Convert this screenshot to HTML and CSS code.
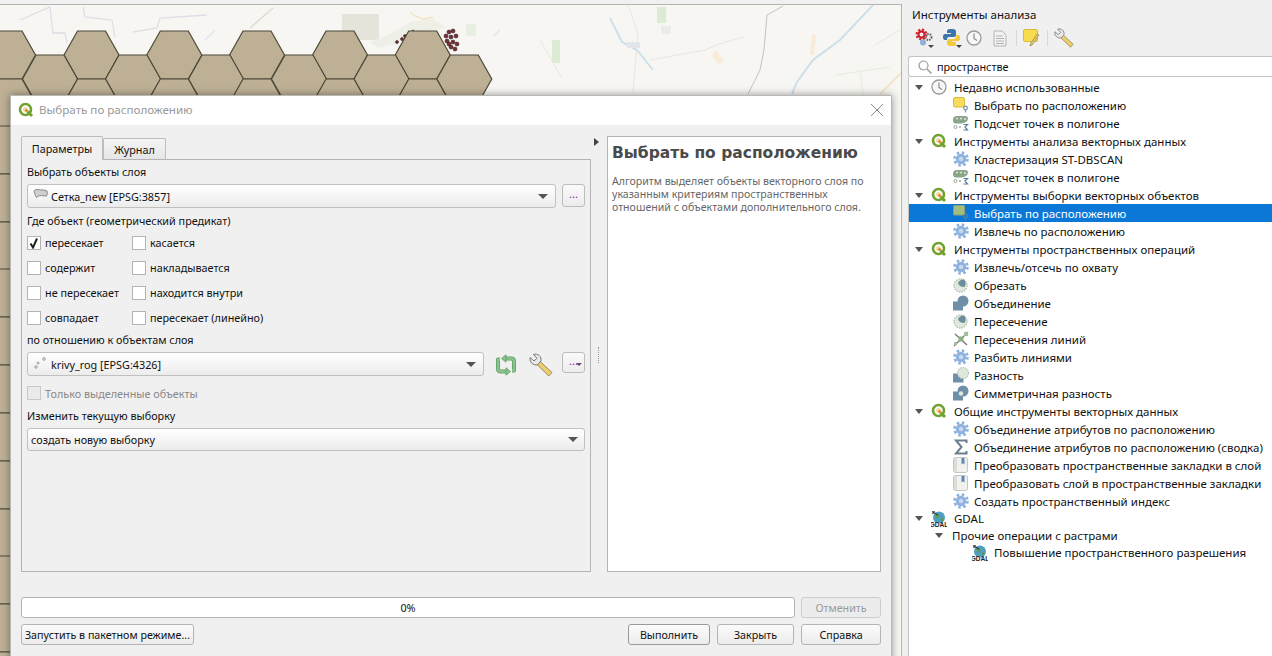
FILE: index.html
```html
<!DOCTYPE html>
<html lang="ru">
<head>
    <meta charset="UTF-8">
    <meta name="viewport" content="width=device-width, initial-scale=1.0">
    <title>Выбрать по расположению</title>
    <link rel="stylesheet" href="styles.css">
</head>
<body>

    <!-- shared icons -->
    <svg class="icon-defs" aria-hidden="true">
        <defs>
            <symbol id="i-qgis" viewBox="0 0 16 16">
                <circle cx="7.500" cy="7.500" r="5.500" fill="none" stroke="#6fa22e" stroke-width="2.600"/>
                <path d="M9.500 9.500l4.500 4.500" stroke="#6fa22e" stroke-width="3"/>
                <path d="M7.500 5a2.500 2.500 0 0 1 0 5a2.500 2.500 0 0 1 0-5z" fill="#f3d9a0"/>
                <circle cx="8.500" cy="8.500" r="1.300" fill="#e8701a"/>
            </symbol>
            <symbol id="i-clock" viewBox="0 0 16 16">
                <circle cx="8" cy="8" r="7" fill="#f7f7f7" stroke="#9a9a9a" stroke-width="1.300"/>
                <path d="M8 3.500V8.500L11 10.500" fill="none" stroke="#8a8a8a" stroke-width="1.200"/>
            </symbol>
            <symbol id="i-select" viewBox="0 0 16 16">
                <rect x="0.500" y="0.500" width="11" height="9.500" rx="1.500" fill="#f7dd5e" stroke="#d8bb3a"/>
                <circle cx="12.500" cy="11" r="1.800" fill="none" stroke="#6f8fa8" stroke-width="1.200"/>
                <path d="M12.500 13v2.500" stroke="#6f8fa8" stroke-width="1.200"/>
            </symbol>
            <symbol id="i-select-on" viewBox="0 0 16 16">
                <rect x="0.500" y="0.500" width="11" height="9.500" rx="1" fill="#a3bd80" stroke="#8aa46c"/>
                <circle cx="12.500" cy="11" r="1.800" fill="none" stroke="#5f7f9f" stroke-width="1.200"/>
                <path d="M12.500 13v2.500" stroke="#5f7f9f" stroke-width="1.200"/>
            </symbol>
            <symbol id="i-count" viewBox="0 0 16 16">
                <path d="M3 1h9q3 0 3 2.500T12 7.500L9 8.500H3Q0 8.500 0 5t3-4z" fill="#8aa58a"/>
                <circle cx="4" cy="3.500" r="1" fill="#dfe8dc"/>
                <circle cx="8" cy="3.500" r="1" fill="#dfe8dc"/>
                <circle cx="12" cy="4" r="1" fill="#dfe8dc"/>
                <circle cx="2.500" cy="12" r="1.500" fill="none" stroke="#9aa89a"/>
                <circle cx="7" cy="12" r="1" fill="#9aa89a"/>
                <path d="M10.500 9.500h4l-2.500 2.500 2.500 3h-4" fill="none" stroke="#5a7fa0" stroke-width="1.200"/>
            </symbol>
            <symbol id="i-gear" viewBox="0 0 16 16">
                <circle cx="8" cy="8" r="6.500" fill="none" stroke="#8db0df" stroke-width="2.600" stroke-dasharray="2.550 2.550"/>
                <circle cx="8" cy="8" r="5.200" fill="#8fb1de"/>
                <circle cx="8" cy="8" r="2.300" fill="#c6d7ef"/>
            </symbol>
            <symbol id="i-clip" viewBox="0 0 16 16">
                <circle cx="7.500" cy="8.500" r="6.500" fill="#dfe8dc" stroke="#b4c6b2" stroke-width="1.500" stroke-dasharray="1.500 1"/>
                <path d="M5 6q2-4 6-3.500 3 3 .5 7.500Q6 10 5 6z" fill="#6c8d9c"/>
            </symbol>
            <symbol id="i-union" viewBox="0 0 16 16">
                <rect x="0" y="6.500" width="10" height="9" fill="#6d90a8"/>
                <circle cx="10" cy="6" r="5.500" fill="#6d90a8"/>
            </symbol>
            <symbol id="i-lines" viewBox="0 0 16 16">
                <path d="M1 15L15 1M2 3l12 11" stroke="#6f7a6f" stroke-width="1.300" fill="none"/>
                <rect x="5.500" y="5.500" width="5" height="5" fill="#8caf84"/>
                <rect x="11" y="1" width="4" height="4" fill="#a5bd9f"/>
                <rect x="1" y="11" width="3" height="3" fill="#a5bd9f"/>
            </symbol>
            <symbol id="i-diff" viewBox="0 0 16 16">
                <rect x="0" y="6.500" width="10.500" height="9" fill="#6d90a8"/>
                <circle cx="10" cy="6" r="5.500" fill="#dfe8dc" stroke="#b4c6b2" stroke-width="1.200" stroke-dasharray="1.500 1"/>
            </symbol>
            <symbol id="i-symdiff" viewBox="0 0 16 16">
                <rect x="0" y="6.500" width="10" height="9" fill="#6d90a8"/>
                <circle cx="10" cy="6" r="5.500" fill="#6d90a8"/>
                <circle cx="8" cy="8.500" r="2.200" fill="#dfe8dc"/>
            </symbol>
            <symbol id="i-sigma" viewBox="0 0 16 16">
                <path d="M13.500 4V1.500H3L8.500 8 3 14.500H13.500V12" fill="none" stroke="#6a7f8c" stroke-width="2"/>
            </symbol>
            <symbol id="i-book" viewBox="0 0 16 16">
                <rect x="0.500" y="0.500" width="14" height="15" rx="2" fill="#f1f1ee" stroke="#c4c4c0"/>
                <rect x="1" y="1" width="3" height="14" fill="#dcdcd8"/>
                <path d="M8.500 1h3v6.500l-1.500-1.200-1.500 1.200z" fill="#5f87b5"/>
            </symbol>
            <symbol id="i-gdal" viewBox="0 0 16 16">
                <circle cx="8" cy="6.500" r="6" fill="#4f9fc4"/>
                <path d="M4 4l3-1 2 2-3 3zM9 8l3-1 1 2-2 2z" fill="#5f9a52"/>
                <path d="M1 0.500l6 3.500M3.500 0l-2 3" stroke="#333" stroke-width="1.100"/>
                <text x="8" y="15.500" class="gdal-text">GDAL</text>
            </symbol>
            <symbol id="i-wrench" viewBox="0 0 24 24">
                <path d="M10.500 8L23 19.500 19.800 23 7.500 11z" fill="#eccf6c" stroke="#7c7654" stroke-width="0.800"/>
                <path d="M1.200 4.500L5 8 8 5.300 4.500 1.500C8.500 0 12.800 3.200 12 8L8.500 11.800C4 12.800 0.200 9 1.200 4.500z" fill="#e9e9e9" stroke="#777" stroke-width="1"/>
            </symbol>
            <symbol id="i-layer-poly" viewBox="0 0 16 16">
                <path d="M1 3q1-2 4-1.500t5 .5 4 1q1 3-.5 5-2.500 0-5-.5t-5 2q-2-3-2.500-6.500z" fill="#cfcfcf" stroke="#8c8c8c"/>
            </symbol>
            <symbol id="i-layer-point" viewBox="0 0 16 16">
                <circle cx="3" cy="11" r="1.200" fill="none" stroke="#999"/>
                <circle cx="5" cy="7" r="1" fill="none" stroke="#999"/>
                <circle cx="11" cy="3" r="1.300" fill="none" stroke="#999"/>
            </symbol>
        </defs>
    </svg>

    <div class="workspace">
        <div class="map-canvas">
            <svg class="map" width="901" height="651" viewBox="0 5 901 651">
                <defs>
                    <polygon id="hex" points="-27.500,0 -14,-24 14,-24 27.500,0 14,24 -14,24"/>
                </defs>
                <rect x="0" y="5" width="901" height="651" fill="#f7f6f2"/>
                <!-- land use patches -->
                <rect x="342" y="14" width="37" height="26" fill="#e4e4da"/>
                <path d="M370 42l20-8 20-12 22-4 14 10-30 4-20 12-18 4z" fill="#eef0e8"/>
                <rect x="466" y="24" width="10" height="12" fill="#e6efe0"/>
                <rect x="657" y="7" width="9" height="16" fill="#dcecd2"/>
                <rect x="552" y="40" width="8" height="23" fill="#dcecd2"/>
                <rect x="661" y="26" width="10" height="8" fill="#ebebe8"/>
                <path d="M812 35l4 0-2 20-4 0z" fill="#f8ecd8"/>
                <path d="M716 50l8 12-6 2-6-8z" fill="#f8ecd8"/>
                <!-- boundaries -->
                <path d="M20 20L50 7 53 33H65L67 43M83 7L85 17 112 20 115 37M133 32L157 28 160 18 207 15" fill="none" stroke="#e2dce6" stroke-width="1.300"/>
                <path d="M250 28L273 8" fill="none" stroke="#dcdcd6" stroke-width="1.500"/>
                <path d="M540 40l22 38M628 5l10 28-5 60M650 60l55-10 20-8 20-5M900 30l-25 15" fill="none" stroke="#e8e6e2"/>
                <path d="M860 70l3 25M835 75l55-8" fill="none" stroke="#e4eede"/>
                <!-- rivers -->
                <path d="M610 18l12 24 15 8 16 20M873 5L840 40 813 60 797 82 792 94" fill="none" stroke="#cbe0ea" stroke-width="2"/>
                <path d="M205 40l10-10M500 30l-6 6" fill="none" stroke="#dce8ee" stroke-width="1.500"/>
                <path d="M627 42h13v6h-13z" fill="#e2e6e8"/>
                <!-- roads -->
                <path d="M783 6L767 15 764 50 760 70 748 94" fill="none" stroke="#c2c2c0"/>
                <path d="M901 73L880 94" fill="none" stroke="#f4dcb8" stroke-width="1.300"/>
                <path d="M410 12l5 4 8 3 10-2" fill="none" stroke="#f2dcae"/>
                <!-- points layer -->
                <g class="points">
                    <circle cx="397" cy="42" r="1.500"/><circle cx="402" cy="39" r="1.500"/><circle cx="405" cy="36" r="1.500"/>
                    <circle cx="413" cy="31" r="1"/><circle cx="449" cy="32" r="2"/><circle cx="453" cy="31" r="2"/>
                    <circle cx="446" cy="36" r="2"/><circle cx="451" cy="37" r="2"/><circle cx="456" cy="36" r="2"/>
                    <circle cx="447" cy="41" r="2"/><circle cx="453" cy="42" r="2"/><circle cx="457" cy="44" r="2"/>
                    <circle cx="451" cy="47" r="2"/><circle cx="455" cy="49" r="2"/><circle cx="449" cy="44" r="2"/>
                </g>
                <!-- grid layer -->
                <g class="hexes">
                    <use href="#hex" x="8" y="55"/><use href="#hex" x="91.500" y="55"/><use href="#hex" x="174.300" y="55"/>
                    <use href="#hex" x="257" y="55"/><use href="#hex" x="340" y="55"/><use href="#hex" x="422.700" y="55"/>
                    <use href="#hex" x="50" y="79"/><use href="#hex" x="133" y="79"/><use href="#hex" x="216" y="79"/>
                    <use href="#hex" x="299" y="79"/><use href="#hex" x="381.500" y="79"/><use href="#hex" x="464.300" y="79"/>
                    <use href="#hex" x="8" y="103"/><use href="#hex" x="91.500" y="103"/><use href="#hex" x="174.300" y="103"/>
                    <use href="#hex" x="257" y="103"/><use href="#hex" x="340" y="103"/><use href="#hex" x="422.700" y="103"/>
                    <use href="#hex" x="8" y="150"/><use href="#hex" x="8" y="198"/><use href="#hex" x="8" y="246"/>
                    <use href="#hex" x="8" y="293"/><use href="#hex" x="8" y="341"/><use href="#hex" x="8" y="389"/>
                    <use href="#hex" x="8" y="437"/><use href="#hex" x="8" y="485"/><use href="#hex" x="8" y="533"/>
                    <use href="#hex" x="8" y="580"/><use href="#hex" x="8" y="628"/><use href="#hex" x="8" y="676"/>
                </g>
            </svg>
        </div>

        <div class="dialog">
            <div class="dialog-title">
                <svg class="ico"><use href="#i-qgis"/></svg>
                <span class="dialog-caption">Выбрать по расположению</span>
                <svg class="close-x" width="14" height="14" viewBox="0 0 14 14"><path d="M1 1l12 12M13 1L1 13" stroke="#8a8a8a" fill="none"/></svg>
            </div>
            <div class="dialog-body">
                <div class="main-split">
                    <div class="tabs-col">
                        <div class="tabbar">
                            <div class="tab tab-active">Параметры</div>
                            <div class="tab">Журнал</div>
                        </div>
                        <div class="tab-pane">
                            <div class="field-label">Выбрать объекты слоя</div>
                            <div class="line">
                                <div class="combo combo-tall">
                                    <svg class="ico"><use href="#i-layer-poly"/></svg>
                                    <span class="combo-text">Сетка_new [EPSG:3857]</span>
                                    <span class="arrow"></span>
                                </div>
                                <button class="dots-btn">...</button>
                            </div>
                            <div class="field-label label-pred">Где объект (геометрический предикат)</div>
                            <div class="checks">
                                <label class="check"><span class="box"><svg width="12" height="12" viewBox="0 0 12 12"><path d="M2.500 6.500l2.500 4 4-9" fill="none" stroke="#222" stroke-width="2"/></svg></span>пересекает</label>
                                <label class="check"><span class="box"></span>касается</label>
                                <label class="check"><span class="box"></span>содержит</label>
                                <label class="check"><span class="box"></span>накладывается</label>
                                <label class="check"><span class="box"></span>не пересекает</label>
                                <label class="check"><span class="box"></span>находится внутри</label>
                                <label class="check"><span class="box"></span>совпадает</label>
                                <label class="check"><span class="box"></span>пересекает (линейно)</label>
                            </div>
                            <div class="field-label label-rel">по отношению к объектам слоя</div>
                            <div class="line">
                                <div class="combo combo-tall">
                                    <svg class="ico"><use href="#i-layer-point"/></svg>
                                    <span class="combo-text">krivy_rog [EPSG:4326]</span>
                                    <span class="arrow"></span>
                                </div>
                                <svg class="tool-refresh" width="22" height="22" viewBox="0 0 22 22">
                                    <g class="loop-back">
                                        <path d="M9 4.500h7q3 0 3 3v9h-2M13 17.500H6q-3 0-3-3v-9h2"/>
                                    </g>
                                    <g class="loop-front">
                                        <path d="M9 4.500h7q3 0 3 3v9h-2M13 17.500H6q-3 0-3-3v-9h2"/>
                                    </g>
                                    <path class="loop-head" d="M6.500 4.500L11 0.800V8.200zM15.500 17.500L11 13.800V21.200z"/>
                                </svg>
                                <svg class="tool-wrench"><use href="#i-wrench"/></svg>
                                <button class="dots-btn dots-menu">...<span class="arrow arrow-small"></span></button>
                            </div>
                            <label class="check check-off"><span class="box"></span>Только выделенные объекты</label>
                            <div class="field-label label-mod">Изменить текущую выборку</div>
                            <div class="combo combo-wide">
                                <span class="combo-text">создать новую выборку</span>
                                <span class="arrow"></span>
                            </div>
                        </div>
                    </div>
                    <div class="splitter">
                        <span class="collapse"></span>
                        <span class="grip"></span>
                    </div>
                    <div class="help">
                        <h2>Выбрать по расположению</h2>
                        <p>Алгоритм выделяет объекты векторного слоя по указанным критериям пространственных отношений с объектами дополнительного слоя.</p>
                    </div>
                </div>
                <div class="progress-line">
                    <div class="progress">0%</div>
                    <button class="btn btn-off">Отменить</button>
                </div>
                <div class="button-line">
                    <button class="btn btn-batch">Запустить в пакетном режиме...</button>
                    <span class="spacer"></span>
                    <button class="btn btn-run">Выполнить</button>
                    <button class="btn btn-closeit">Закрыть</button>
                    <button class="btn btn-help">Справка</button>
                </div>
            </div>
        </div>
    </div>

    <div class="panel">
        <div class="panel-title">Инструменты анализа</div>
        <div class="toolbar">
            <svg class="tb tb-gears" width="20" height="20" viewBox="0 0 20 20">
                <circle cx="6.500" cy="6.500" r="4.500" fill="none" stroke="#d9252a" stroke-width="3" stroke-dasharray="2 1.500"/>
                <circle cx="6.500" cy="6.500" r="3" fill="none" stroke="#c8202a" stroke-width="2"/>
                <circle cx="13.500" cy="9" r="3" fill="none" stroke="#666" stroke-width="2" stroke-dasharray="1.500 1"/>
                <circle cx="8" cy="14.500" r="3" fill="#8fb1dd"/>
                <path d="M13 17h6l-3 3z" fill="#444"/>
            </svg>
            <svg class="tb tb-python" width="20" height="20" viewBox="0 0 20 20">
                <path d="M8 1h3q3 0 3 3v3q0 2-2 2H7q-2 0-2 2v1H3Q1 12 1 9t2-3h6V5H5V3q0-2 3-2z" fill="#3a76a8"/>
                <path d="M14 7h2q2 0 2 3t-2 3h-6v1h4v2q0 2-3 2H8q-3 0-3-3v-2q0-2 2-2h5q2 0 2-2z" fill="#f4c93c"/>
                <path d="M14 17h6l-3 3z" fill="#444"/>
            </svg>
            <svg class="tb tb-clock"><use href="#i-clock"/></svg>
            <svg class="tb tb-doc" width="14" height="17" viewBox="0 0 14 17">
                <path d="M1 1h8l4 4v11H1z" fill="#f2f2f2" stroke="#b4b4b4"/>
                <path d="M3 6h7M3 8.500h8M3 11h8M3 13.500h8" stroke="#b4b4b4"/>
            </svg>
            <span class="tb-sep"></span>
            <svg class="tb tb-note" width="18" height="18" viewBox="0 0 18 18">
                <rect x="0.500" y="0.500" width="14" height="12" rx="1.500" fill="#f7dd4e" stroke="#d8bb3a"/>
                <path d="M16 6L9 16l-2 1 .5-2.500L14 5z" fill="#e4c860" stroke="#9a8a50" stroke-width="0.800"/>
            </svg>
            <span class="tb-sep"></span>
            <svg class="tb tb-wrench"><use href="#i-wrench"/></svg>
        </div>
        <div class="search">
            <svg width="14" height="14" viewBox="0 0 14 14"><circle cx="5.500" cy="5.500" r="4.500" fill="none" stroke="#9a9a9a" stroke-width="1.200"/><path d="M9 9l4.500 4.500" stroke="#9a9a9a" stroke-width="1.500"/></svg>
            <span>пространстве</span>
        </div>
        <ul class="tree">
            <li class="row group"><span class="tw"></span><svg class="ico"><use href="#i-clock"/></svg>Недавно использованные</li>
            <li class="row child"><svg class="ico"><use href="#i-select"/></svg>Выбрать по расположению</li>
            <li class="row child"><svg class="ico"><use href="#i-count"/></svg>Подсчет точек в полигоне</li>
            <li class="row group"><span class="tw"></span><svg class="ico"><use href="#i-qgis"/></svg>Инструменты анализа векторных данных</li>
            <li class="row child"><svg class="ico"><use href="#i-gear"/></svg>Кластеризация ST-DBSCAN</li>
            <li class="row child"><svg class="ico"><use href="#i-count"/></svg>Подсчет точек в полигоне</li>
            <li class="row group"><span class="tw"></span><svg class="ico"><use href="#i-qgis"/></svg>Инструменты выборки векторных объектов</li>
            <li class="row child selected"><svg class="ico"><use href="#i-select-on"/></svg>Выбрать по расположению</li>
            <li class="row child"><svg class="ico"><use href="#i-gear"/></svg>Извлечь по расположению</li>
            <li class="row group"><span class="tw"></span><svg class="ico"><use href="#i-qgis"/></svg>Инструменты пространственных операций</li>
            <li class="row child"><svg class="ico"><use href="#i-gear"/></svg>Извлечь/отсечь по охвату</li>
            <li class="row child"><svg class="ico"><use href="#i-clip"/></svg>Обрезать</li>
            <li class="row child"><svg class="ico"><use href="#i-union"/></svg>Объединение</li>
            <li class="row child"><svg class="ico"><use href="#i-clip"/></svg>Пересечение</li>
            <li class="row child"><svg class="ico"><use href="#i-lines"/></svg>Пересечения линий</li>
            <li class="row child"><svg class="ico"><use href="#i-gear"/></svg>Разбить линиями</li>
            <li class="row child"><svg class="ico"><use href="#i-diff"/></svg>Разность</li>
            <li class="row child"><svg class="ico"><use href="#i-symdiff"/></svg>Симметричная разность</li>
            <li class="row group"><span class="tw"></span><svg class="ico"><use href="#i-qgis"/></svg>Общие инструменты векторных данных</li>
            <li class="row child"><svg class="ico"><use href="#i-gear"/></svg>Объединение атрибутов по расположению</li>
            <li class="row child"><svg class="ico"><use href="#i-sigma"/></svg>Объединение атрибутов по расположению (сводка)</li>
            <li class="row child"><svg class="ico"><use href="#i-book"/></svg>Преобразовать пространственные закладки в слой</li>
            <li class="row child"><svg class="ico"><use href="#i-book"/></svg>Преобразовать слой в пространственные закладки</li>
            <li class="row child"><svg class="ico"><use href="#i-gear"/></svg>Создать пространственный индекс</li>
            <li class="row group row-short"><span class="tw"></span><svg class="ico"><use href="#i-gdal"/></svg>GDAL</li>
            <li class="row subgroup row-short"><span class="tw"></span>Прочие операции с растрами</li>
            <li class="row subchild row-short"><svg class="ico"><use href="#i-gdal"/></svg>Повышение пространственного разрешения</li>
        </ul>
    </div>

</body>
</html>
```

FILE: styles.css
```css
* {
    box-sizing: border-box;
}
html, body {
    height: 100%;
}
body {
    margin: 0;
    width: 1272px;
    height: 656px;
    overflow: hidden;
    display: flex;
    background-color: #f0f0f0;
    color: #111;
    font-family: "Noto Sans", "Liberation Sans", sans-serif;
    font-size: 11.5px;
}
.icon-defs {
    position: absolute;
    width: 0;
    height: 0;
}
.ico {
    width: 16px;
    height: 16px;
    flex: none;
}
.gdal-text {
    font-family: "Liberation Sans", sans-serif;
    font-size: 6.5px;
    font-weight: bold;
    text-anchor: middle;
    fill: #222;
}

/* left side, map + floating dialog */
.workspace {
    position: relative;
    flex: 0 0 902px;
    padding-top: 4px;
}
.map-canvas {
    height: 652px;
    border-top: 1px solid #b4b4b4;
    border-right: 1px solid #b4b4b4;
    overflow: hidden;
}
.map {
    display: block;
}
.hexes use {
    fill: #bdb095;
    stroke: #4c4839;
    stroke-width: 1.2;
}
.points circle {
    fill: #7b2c33;
    stroke: #33262a;
    stroke-width: 0.6;
}

.dialog {
    position: absolute;
    left: 10px;
    top: 95px;
    width: 882px;
    height: 590px;
    background-color: #f0f0f0;
    border: 1px solid #b8b8b8;
    box-shadow: 0 0 8px rgba(0, 0, 0, 0.4);
    display: flex;
    flex-direction: column;
    font-size: 10.8px;
}
.dialog-title {
    height: 29px;
    flex: none;
    background-color: #fff;
    display: flex;
    align-items: center;
    padding: 0 7px 2px 7px;
    gap: 5px;
}
.dialog-caption {
    color: #999;
    font-size: 11.6px;
}
.close-x {
    margin-left: auto;
}
.dialog-body {
    padding: 11px 10px 0 10px;
    display: flex;
    flex-direction: column;
}
.main-split {
    display: flex;
    height: 436px;
}
.tabs-col {
    width: 570px;
    flex: none;
    display: flex;
    flex-direction: column;
}
.tabbar {
    display: flex;
    height: 24px;
    align-items: flex-end;
    flex: none;
    position: relative;
    z-index: 1;
    margin-bottom: -1px;
}
.tab {
    height: 22px;
    width: 63px;
    background: linear-gradient(#f4f4f4, #e6e6e6);
    border: 1px solid #bcbcbc;
    border-bottom: 1px solid #b4b4b4;
    border-radius: 2px 2px 0 0;
    display: flex;
    align-items: center;
    justify-content: center;
}
.tab-active {
    height: 24px;
    width: 82px;
    background: #f0f0f0;
    border-bottom-color: #f0f0f0;
}
.tab-pane {
    flex: 1;
    border: 1px solid #b4b4b4;
    padding: 5px 5px 0 5px;
}
.field-label {
    height: 14px;
    line-height: 14px;
    margin-top: 0;
}
.line {
    display: flex;
    align-items: flex-start;
    margin-top: 5px;
}
.combo {
    display: flex;
    align-items: center;
    border: 1px solid #c0c0c0;
    border-radius: 3px;
    background: linear-gradient(#fff, #ececec);
    padding: 0 6px 0 5px;
    gap: 2px;
    flex: 1;
    position: relative;
}
.combo-tall {
    height: 24px;
    padding-right: 7px;
}
.combo-wide {
    height: 23px;
    margin-top: 5px;
    padding-left: 3px;
}
.combo-text {
    flex: 1;
}
.arrow {
    width: 0;
    height: 0;
    border-left: 5px solid transparent;
    border-right: 5px solid transparent;
    border-top: 5px solid #555;
}
.dots-btn {
    width: 23px;
    height: 23px;
    margin-left: 6px;
    padding: 0 0 4px 0;
    flex: none;
    border: 1px solid #bcbcbc;
    border-radius: 3px;
    background: linear-gradient(#fafafa, #ececec);
    color: #8a1aa0;
    font-family: inherit;
    font-size: 11px;
    position: relative;
}
.dots-menu {
    height: 21px;
}
.arrow-small {
    position: absolute;
    right: 2px;
    bottom: 6px;
    border-left-width: 3px;
    border-right-width: 3px;
    border-top-width: 3px;
}
.tool-refresh {
    margin: 2px 0 0 11px;
    flex: none;
}
.loop-back path, .loop-front path {
    fill: none;
    stroke-linejoin: round;
}
.loop-back path {
    stroke: #5f9f62;
    stroke-width: 4;
}
.loop-front path {
    stroke: #8cc28c;
    stroke-width: 2.400;
}
.loop-head {
    fill: #8cc28c;
    stroke: #5f9f62;
    stroke-width: 0.800;
}
.tool-wrench {
    width: 24px;
    height: 24px;
    margin: 1px 3px 0 12px;
    flex: none;
}
.label-pred {
    margin-top: 6px;
}
.checks {
    display: grid;
    grid-template-columns: 105px 1fr;
    grid-auto-rows: 25px;
    margin-top: 2px;
}
.check {
    display: flex;
    align-items: center;
    gap: 4px;
}
.box {
    width: 14px;
    height: 14px;
    flex: none;
    background-color: #fff;
    border: 1px solid #b4b4b4;
    display: flex;
    align-items: center;
    justify-content: center;
}
.label-rel {
    margin-top: 3px;
}
.check-off {
    color: #888;
    height: 16px;
    margin-top: 8px;
}
.check-off .box {
    background-color: #eaeaea;
    border-color: #c8c8c8;
}
.label-mod {
    margin-top: 8px;
}

.splitter {
    width: 16px;
    flex: none;
    position: relative;
}
.collapse {
    position: absolute;
    left: 3px;
    top: 2px;
    border-top: 4px solid transparent;
    border-bottom: 4px solid transparent;
    border-left: 5px solid #444;
}
.grip {
    position: absolute;
    left: 7px;
    top: 211px;
    height: 16px;
    border-left: 1px dotted #999;
}
.help {
    width: 274px;
    flex: none;
    background-color: #fff;
    border: 1px solid #b4b4b4;
    padding: 6px 4px;
    color: #666;
}
.help h2 {
    margin: 0 0 12px 0;
    font-family: "DejaVu Sans", sans-serif;
    font-size: 15.5px;
    font-weight: bold;
    line-height: 20px;
    color: #4a4a4a;
    white-space: nowrap;
}
.help p {
    margin: 0;
    font-size: 10.6px;
    line-height: 13px;
}
.progress-line {
    display: flex;
    margin-top: 25px;
    gap: 6px;
}
.progress {
    width: 774px;
    height: 21px;
    background-color: #fff;
    border: 1px solid #b4b4b4;
    border-radius: 3px;
    text-align: center;
    line-height: 19px;
}
.button-line {
    display: flex;
    margin-top: 6px;
    gap: 7px;
}
.spacer {
    flex: 1;
}
.btn {
    height: 21px;
    padding: 0;
    border: 1px solid #b4b4b4;
    border-radius: 3px;
    background: linear-gradient(#fbfbfb, #ececec);
    color: #111;
    font-family: inherit;
    font-size: 10.7px;
    width: 80px;
    flex: none;
}
.btn-off {
    color: #999;
    background: #ececec;
    border-color: #cdcdcd;
}
.btn-batch {
    width: 173px;
}
.btn-run {
    width: 82px;
    border-color: #9a9a9a;
}
.btn-closeit {
    width: 77px;
}

/* right side, processing toolbox */
.panel {
    flex: 1;
    min-width: 0;
    padding-left: 6px;
}
.panel-title {
    height: 22px;
    padding: 6px 0 0 4px;
    line-height: 18px;
}
.toolbar {
    height: 32px;
    display: flex;
    align-items: center;
    padding-left: 7px;
}
.tb {
    flex: none;
}
.tb-gears {
    margin-right: 7px;
}
.tb-python {
    margin-right: 4px;
}
.tb-clock {
    width: 16px;
    height: 16px;
    margin-right: 11px;
}
.tb-doc {
    margin-right: 9px;
}
.tb-sep {
    width: 1px;
    height: 16px;
    background-color: #d8d8d8;
    flex: none;
}
.tb-note {
    margin: 0 6px 0 6px;
}
.tb-wrench {
    width: 20px;
    height: 20px;
    margin-left: 6px;
}
.search {
    height: 21px;
    margin-top: 2px;
    background-color: #fff;
    border: 1px solid #c4c4c4;
    border-right: 0;
    border-radius: 3px 0 0 3px;
    display: flex;
    align-items: center;
    gap: 5px;
    padding-left: 9px;
    font-size: 10.8px;
}
.tree {
    list-style: none;
    margin: 0;
    padding: 1px 0 0 0;
    height: 580px;
    background-color: #fff;
    border-left: 1px solid #c4c4c4;
    white-space: nowrap;
}
.row {
    display: flex;
    align-items: center;
    height: 18px;
}
.row-short {
    height: 17px;
}
.group {
    padding-left: 6px;
}
.group .ico {
    margin: 0 7px 0 8px;
}
.tw {
    width: 0;
    height: 0;
    border-left: 4.500px solid transparent;
    border-right: 4.500px solid transparent;
    border-top: 5px solid #555;
    flex: none;
}
.child {
    padding-left: 44px;
}
.child .ico {
    margin-right: 5px;
}
.subgroup {
    padding-left: 26px;
}
.subgroup .tw {
    margin-right: 9px;
}
.subchild {
    padding-left: 63px;
}
.subchild .ico {
    margin-right: 6px;
}
.selected {
    background-color: #0b78d7;
    color: #fff;
}
```
